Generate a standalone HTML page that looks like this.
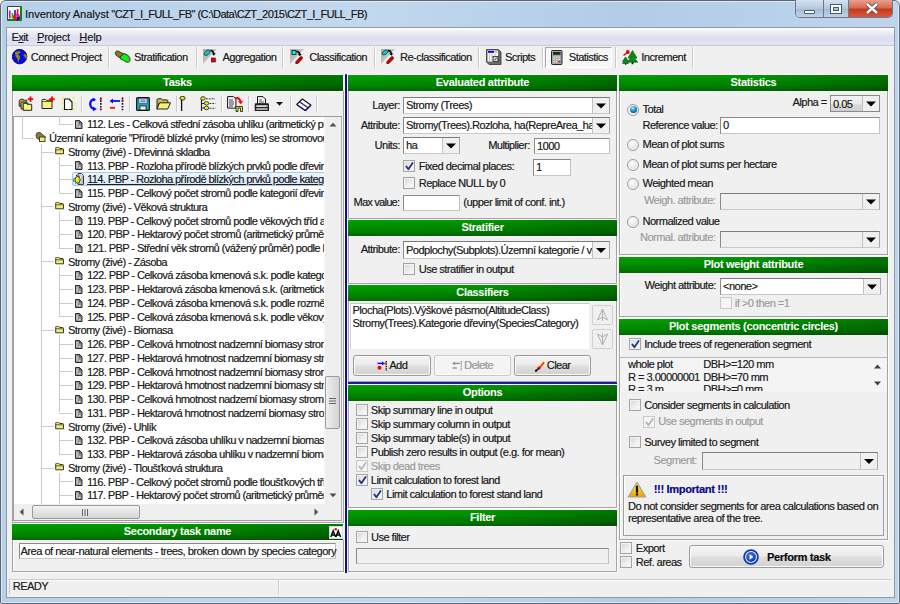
<!DOCTYPE html><html><head><meta charset="utf-8"><style>
html,body{margin:0;padding:0;width:900px;height:604px;overflow:hidden;background:#f0f0f0}
body{position:relative;font-family:"Liberation Sans",sans-serif}
.a{position:absolute}
.t{position:absolute;font-size:11px;line-height:13px;letter-spacing:-0.5px;white-space:nowrap;color:#1e1e1e;text-shadow:0.3px 0 0 rgba(30,30,30,0.5)}
.b{font-weight:bold;letter-spacing:-0.3px}
.g{color:#9d9d9d;text-shadow:0.3px 0 0 rgba(157,157,157,0.5)}
.hdr{position:absolute;background:linear-gradient(90deg,rgba(0,0,0,0) 0,rgba(0,0,0,0.06) 50%,rgba(0,0,0,0.26) 100%),linear-gradient(#00a200,#008c00 50%,#007800 85%,#006800);color:#fff;font-size:11px;font-weight:bold;letter-spacing:-0.3px;text-align:center;box-shadow:0 -1px 0 #fff,0 1px 0 #fff}
.cb{position:absolute;width:10.4px;height:10.4px;border:1px solid #a4a4a4;background:linear-gradient(135deg,#d6d6d6,#f0f0f0 60%,#fafafa);box-shadow:inset 0 0 0 1px #f2f2f2}
.rd{position:absolute;width:10px;height:10px;border:1px solid #9c9c9c;border-radius:50%;background:radial-gradient(circle at 40% 35%,#fdfdfd 0,#e8e8e8 55%,#cdcdcd 100%);box-shadow:inset 0 0 0 1px #f6f6f6;box-sizing:content-box}
.cmb{position:absolute;box-sizing:border-box;border:1px solid #7a7a7a;border-right-color:#a8a8a8;border-bottom-color:#c8c8c8;border-left-color:#8a8a8a}
.cbtn{position:absolute;right:0;top:0;bottom:0;background:#f0f0f0;border-left:1px solid #c0c0c0}
.tb{position:absolute;box-sizing:border-box;border:1px solid #8a8a8a;border-right-color:#c0c0c0;border-bottom-color:#c8c8c8}
.btn{position:absolute;box-sizing:border-box;border:1px solid #9a9a9a;border-radius:3px;background:linear-gradient(#f4f4f4 0,#ececec 45%,#dedede 55%,#d2d2d2 100%);box-shadow:inset 0 0 0 1px #fbfbfb}
.sep{position:absolute;width:1px;background:#c8c8c8;box-shadow:1px 0 0 #fff}
</style></head><body>

<div class="a" style="left:0px;top:0px;width:900px;height:604px;background:linear-gradient(90deg,#b6d0ea,#c2d8ee 40%,#b2cce8 70%,#bed5ec);border:1px solid #5e6670;box-shadow:inset 1px 1px 0 #dce9f6,inset -1px -1px 0 #dce9f6;box-sizing:border-box;border-radius:6px 6px 2px 2px"></div>
<div class="a" style="left:6px;top:27px;width:889px;height:571px;background:#f0f0f0;border:1px solid #8e9aaa;box-sizing:border-box"></div>
<svg class="a" style="left:7px;top:6px" width="15" height="15" viewBox="0 0 15 15">
<rect x="0" y="0" width="15" height="15" fill="#0a8a0a"/>
<rect x="0" y="0" width="13" height="13" fill="#fff"/>
<path d="M0.5 13V0.5H13" stroke="#404040" stroke-width="1" fill="none"/>
<rect x="2" y="4.5" width="1.6" height="8" fill="#e000e0"/><rect x="4.6" y="7" width="1.6" height="5.5" fill="#00d000"/><rect x="7.2" y="4" width="1.6" height="5" fill="#1010e0"/><rect x="9.8" y="3" width="1.6" height="6" fill="#f01010"/>
<path d="M9.5 11 L9.5 7.5 A3.5 3.5 0 0 1 13 11z" fill="#e010e0"/><path d="M9.5 11 L13 11 A3.5 3.5 0 0 1 9.5 14.5z" fill="#0a0aa0"/><path d="M9.5 11 L9.5 14.5 A3.5 3.5 0 0 1 6 11 A3.5 3.5 0 0 1 9.5 7.5z" fill="#f01010"/>
</svg>
<div class="t" style="left:25px;top:7.9px;font-size:11px;letter-spacing:0px;color:#1b1b1b">Inventory Analyst<span style="letter-spacing:-0.53px"> "CZT_I_FULL_FB" (C:\Data\CZT_2015\CZT_I_FULL_FB)</span></div>
<div class="a" style="left:795px;top:0;width:98px;height:18px;border:1px solid #6a7890;border-top:none;border-radius:0 0 5px 5px;overflow:hidden;box-sizing:border-box;display:flex">
<div style="width:27px;height:100%;background:linear-gradient(#d5e2f0,#b3c8de 50%,#a3b9d2 51%,#c0d3e8);border-right:1px solid #6a7890;position:relative"><div style="position:absolute;left:7.5px;top:10px;width:9px;height:2px;background:#fff;border:1px solid #4a5870;border-radius:1px"></div></div>
<div style="width:24px;height:100%;background:linear-gradient(#d5e2f0,#b3c8de 50%,#a3b9d2 51%,#c0d3e8);border-right:1px solid #6a7890;position:relative"><div style="position:absolute;left:7px;top:5px;width:6px;height:4px;border:2px solid #fff;outline:1px solid #4a5870;box-shadow:inset 0 0 0 1px #4a5870"></div></div>
<div style="flex:1;height:100%;background:linear-gradient(#e8a090,#d86a50 45%,#c7381c 55%,#d85a3c);position:relative"><svg width="46" height="18" style="position:absolute;left:0;top:0"><path d="M18 4 L28 13 M28 4 L18 13" stroke="#454545" stroke-width="4"/><path d="M18 4 L28 13 M28 4 L18 13" stroke="#fff" stroke-width="2.4"/></svg></div>
</div>
<div class="a" style="left:7px;top:28px;width:887px;height:17px;background:linear-gradient(#ffffff,#f2f3f9 15%,#e2e5f1 45%,#dcdfef 60%,#e2e4f3)"></div>
<div class="a" style="left:7px;top:45px;width:887px;height:1px;background:#c9cad6"></div>
<div class="t " style="left:11.5px;top:30.7px;"><span>E<u>x</u>it</span></div>
<div class="t " style="left:37px;top:30.7px;letter-spacing:-0.2px"><u>P</u>roject</div>
<div class="t " style="left:79.3px;top:30.7px;letter-spacing:-0.1px"><u>H</u>elp</div>
<div class="sep" style="left:108px;top:47px;height:21px"></div>
<div class="sep" style="left:196px;top:47px;height:21px"></div>
<div class="sep" style="left:282px;top:47px;height:21px"></div>
<div class="sep" style="left:374px;top:47px;height:21px"></div>
<div class="sep" style="left:478px;top:47px;height:21px"></div>
<div class="sep" style="left:542px;top:47px;height:21px"></div>
<div class="sep" style="left:615px;top:47px;height:21px"></div>
<div class="sep" style="left:692px;top:47px;height:21px"></div>
<div class="a" style="left:545px;top:47px;width:67px;height:21px;border:1px solid #a8a8a8;border-right-color:#fff;border-bottom-color:#fff;background:#f7f7f7;box-sizing:border-box"></div>
<div class="t " style="left:30.7px;top:51.2px;">Connect Project</div>
<div class="t " style="left:134px;top:51.2px;">Stratification</div>
<div class="t " style="left:222.5px;top:51.2px;">Aggregation</div>
<div class="t " style="left:309.2px;top:51.2px;">Classification</div>
<div class="t " style="left:400px;top:51.2px;">Re-classification</div>
<div class="t " style="left:505px;top:51.2px;">Scripts</div>
<div class="t " style="left:568.8px;top:51.2px;">Statistics</div>
<div class="t " style="left:641.3px;top:51.2px;">Increment</div>
<svg class="a" style="left:11.8px;top:49px" width="16" height="16"><circle cx="7.6" cy="7.6" r="7.3" fill="#0a0ae6" stroke="#00006a" stroke-width="0.8"/><path d="M3 3.2 q2 -1.5 5.5 -0.8 l-0.5 1.8 q-1.5 0.3 -2 1.5 q1.5 0.5 2.2 2.2 q0 2 -1.2 3.2 l-0.6 2.4 q-1 -2 -1.2 -4 q-1.3 -1.5 -2 -3.5z" fill="#8a8a10"/><path d="M12.5 5 q1.5 0.2 2.4 1.6 q0.2 2.4 -0.8 3.6 q-1.2 -1.2 -1.6 -2.6 q-0.8 -0.6 -1.4 -1.2z" fill="#8a8a10"/></svg>
<svg class="a" style="left:114px;top:50px" width="17" height="14"><path d="M1.5 2 q1 -1.5 3 -0.8 l6 3.3 l-2.5 4 l-3.5 -1.5 l-2.5 -2 q-1 -1.5 -0.5 -3z" fill="#8a7a10" stroke="#222" stroke-width="0.9"/><path d="M6 7 l4 -3.5 l3.5 1.5 l2.2 2.5 l0.3 3 l-1.5 1.8 l-3 -0.5 l-2.5 -1.8 l-2.5 -1z" fill="#10f010" stroke="#222" stroke-width="0.9"/></svg>
<svg class="a" style="left:203px;top:49px" width="15" height="15"><defs><linearGradient id="tg" x1="0" y1="0" x2="1" y2="1"><stop offset="0" stop-color="#a8a8a8"/><stop offset="1" stop-color="#e0e0e0"/></linearGradient></defs><path d="M0 0 h14 l-14 15z" fill="url(#tg)"/><path d="M1 5.5 q0 -2 2.5 -4 q2.5 -1.5 3.5 0.5 q0.5 1.5 -2 3.8 q-2.5 1.5 -4 -0.3z" fill="#10c8c0" stroke="#0a3a3a" stroke-width="0.8"/><path d="M7.5 1.5 q3 0 3.3 3.5" stroke="#000" stroke-width="1.6" fill="none"/><path d="M8.8 4.5 l2 2.2 l2 -2.2z" fill="#000"/><rect x="8.3" y="9" width="4" height="4" fill="#f00000" stroke="#400" stroke-width="0.6"/></svg>
<svg class="a" style="left:290px;top:49px" width="15" height="15"><path d="M0 0 h14 l-14 15z" fill="url(#tg)"/><rect x="2" y="1.5" width="4" height="4" fill="#10f0f0" stroke="#0a3030" stroke-width="0.9"/><path d="M6.5 2.5 q3 0 3.3 3" stroke="#000" stroke-width="1.6" fill="none"/><path d="M7.8 5 l2 2.2 l2 -2.2z" fill="#000"/><path d="M6 12.5 l4 -4.5 q1.5 -1 2.3 0 q0.7 1 -0.3 2.3 l-4 4.2 q-1.5 0.8 -2.2 0 q-0.6 -0.8 0.2 -2z" fill="#d00000" stroke="#400" stroke-width="0.6"/></svg>
<svg class="a" style="left:381px;top:49px" width="15" height="15"><path d="M0 0 h14 l-14 15z" fill="url(#tg)"/><path d="M1 5 q0 -2 2.5 -3.5 q2.5 -1.2 3.3 0.5 q0.4 1.5 -2 3.3 q-2.5 1.3 -3.8 -0.3z" fill="#10c8c0" stroke="#0a3a3a" stroke-width="0.8"/><path d="M7 1.5 q3 0 3.3 3.5" stroke="#000" stroke-width="1.6" fill="none"/><path d="M8.3 4.5 l2 2.2 l2 -2.2z" fill="#000"/><path d="M6 12.5 l4 -4.5 q1.5 -1 2.3 0 q0.7 1 -0.3 2.3 l-4 4.2 q-1.5 0.8 -2.2 0 q-0.6 -0.8 0.2 -2z" fill="#d00000" stroke="#400" stroke-width="0.6"/></svg>
<svg class="a" style="left:486px;top:49px" width="16" height="16"><path d="M0.5 0.5h12l2.5 2.5v12.5h-12l-2.5-2.5z" fill="#6a6a6a" stroke="#333" stroke-width="0.8"/><rect x="1.5" y="1.5" width="10.5" height="11" fill="#fafafa"/><rect x="2" y="2" width="6" height="1.8" fill="#0000f0"/><rect x="8.5" y="2" width="2.5" height="1.8" fill="#f0a0a0"/><path d="M3.5 4.5v7.5M6 4.5v7.5M9 4.5v3" stroke="#c8c8c8" stroke-width="1.2"/><rect x="7" y="7.5" width="5" height="5" fill="#d8d8d8" stroke="#222" stroke-width="0.8"/><path d="M8 11.5l3-3" stroke="#222" stroke-width="0.9"/></svg>
<svg class="a" style="left:551px;top:50px" width="12" height="15"><rect x="0.5" y="0.5" width="10.5" height="14" rx="1" fill="#a4a4a4" stroke="#111" stroke-width="0.9"/><rect x="2" y="2" width="7.5" height="2.8" fill="#0a3a1a"/><path d="M2.3 6.5h1.6v1.2h-1.6zM4.9 6.5h1.6v1.2h-1.6zM7.5 6.5h1.6v1.2h-1.6zM2.3 8.8h1.6v1.2h-1.6zM4.9 8.8h1.6v1.2h-1.6zM7.5 8.8h1.6v1.2h-1.6zM2.3 11.1h1.6v1.2h-1.6zM4.9 11.1h1.6v1.2h-1.6z" fill="#e8e8e8"/><rect x="7.2" y="11.1" width="2.3" height="1.3" fill="#f01010"/></svg>
<svg class="a" style="left:622px;top:50px" width="16" height="15"><path d="M10.5 0.5 l-4.5 7.5 h2.5 l-3.2 4.2 h10.4 l-3.2 -4.2 h2.5z" fill="#0a8a10" stroke="#062" stroke-width="0.7"/><rect x="9.6" y="12.2" width="1.8" height="2" fill="#111"/><path d="M3.5 7 l-3 4.5 h1.5 l-1.5 2 h6 l-1.5 -2 h1.5z" fill="#0a8a10" stroke="#062" stroke-width="0.7"/><rect x="3" y="13.3" width="1.2" height="1.5" fill="#111"/><path d="M1.5 5.5 l3.5 -3" stroke="#e00" stroke-width="1.4"/><circle cx="5.8" cy="2" r="1.9" fill="#f00010"/></svg>
<div class="hdr" style="left:12px;top:75px;width:331px;height:15.5px;line-height:15.5px">Tasks</div>
<div class="a" style="left:12px;top:91px;width:332px;height:432px;border:1px solid #a4a4a4;border-top:none;box-shadow:inset 1px 0 0 #fff, 1px 1px 0 #fff;box-sizing:border-box"></div>
<svg class="a" style="left:18px;top:96px" width="17" height="16"><path d="M1.2 5.5q0-2 2-2.3h2l1 1h2.5v6h-7.5z" fill="#a8a040" stroke="#222" stroke-width=".9"/><path d="M3 7.5q0-1.5 1.5-1.5h2l1 1h2.5v6h-7z" fill="#c8c058" stroke="#222" stroke-width=".9"/><path d="M5.2 7.3h3l1 1h4.5v6h-8.5z" fill="#f8f480" stroke="#222" stroke-width="1"/><path d="M12.5 0.5v5.4M9.8 3.2h5.4" stroke="#f00" stroke-width="1.8"/></svg>
<svg class="a" style="left:41px;top:96px" width="15" height="14"><path d="M1 4.3q0-1 1-1h2.5l1 1h4.5q1 0 1 1v7.2h-10z" fill="#f8f480" stroke="#222" stroke-width="1"/><path d="M1.2 5.5h9.5" stroke="#222" stroke-width=".7"/><path d="M11 0.5v5.4M8.3 3.2h5.4" stroke="#f00" stroke-width="1.8"/></svg>
<svg class="a" style="left:61px;top:96px" width="15" height="15"><path d="M3.5 3h4.5l3 3v7.5h-7.5z" fill="#fff" stroke="#111" stroke-width="1.1" stroke-linejoin="round"/><path d="M1 1.5l2 2M13.5 1l-2 2.2M1 13.5l2-1.5M14 14l-2-1.5M0.5 7.5h2M12.5 8h2M7.5 14.5v-1" stroke="#f0f020" stroke-width="1.2"/></svg>
<div class="sep" style="left:81px;top:96px;height:16px"></div>
<svg class="a" style="left:88px;top:97px" width="15" height="15"><path d="M6.5 2.2 A4.3 4.8 0 1 0 6.5 11.8" stroke="#0a10f0" stroke-width="2.3" fill="none"/><path d="M4.8 1.2l3.6 1.6l-3.2 1.8z" fill="#0a10f0"/><path d="M5 9.8l4 2.2l-4 2.3z" fill="#0a10f0"/><path d="M12.8 0.5v13" stroke="#111" stroke-width="1.6" stroke-dasharray="1.6 1.2"/><circle cx="12.8" cy="2.5" r="1" fill="#f00"/><circle cx="12.8" cy="12.3" r="1" fill="#f00"/></svg>
<svg class="a" style="left:109px;top:97px" width="15" height="15"><path d="M2.5 4h8.5" stroke="#0a10f0" stroke-width="1.8"/><path d="M0.5 4l3.5-2.6v5.2z" fill="#0a10f0"/><path d="M1 10.8h5" stroke="#f01010" stroke-width="1.8"/><path d="M13.5 0.5v13" stroke="#111" stroke-width="1.6" stroke-dasharray="1.6 1.2"/><circle cx="13.5" cy="3" r="1" fill="#f00"/></svg>
<div class="sep" style="left:129px;top:96px;height:16px"></div>
<svg class="a" style="left:136px;top:97px" width="14" height="14"><path d="M0.6 1.6q0-1 1-1h10.8q1 0 1 1v10.8q0 1-1 1h-10.8q-1 0-1-1z" fill="#18a8b0" stroke="#111" stroke-width="1.1"/><rect x="3" y="1.3" width="8" height="5.2" fill="#e8ecf8" stroke="#223" stroke-width=".5"/><path d="M4.5 3h5M4.5 4.8h5" stroke="#4050c0" stroke-width=".9"/><rect x="4" y="9" width="6" height="4" fill="#f0f0f0" stroke="#111" stroke-width=".7"/></svg>
<svg class="a" style="left:156px;top:98px" width="15" height="12"><path d="M1 2q0-1.3 1.3-1.3h3l1 1.2h4.5q1 0 1 1v2.5h-9l-1.8 5.8z" fill="#c8c040" stroke="#222" stroke-width="1"/><path d="M1 11l2.5-6.2h11l-2.8 6.2z" fill="#f8f070" stroke="#222" stroke-width="1" stroke-linejoin="round"/></svg>
<div class="sep" style="left:176px;top:96px;height:16px"></div>
<svg class="a" style="left:179px;top:96px" width="8" height="16"><ellipse cx="3.5" cy="2.2" rx="2.6" ry="1.9" fill="#e8e020" stroke="#222" stroke-width=".9"/><path d="M2.6 3.8v11.2" stroke="#111" stroke-width="1.3"/></svg>
<svg class="a" style="left:200px;top:96px" width="16" height="16"><path d="M1.5 2.5v12.5M1.5 7.5h3M1.5 12h3" stroke="#222" stroke-width="1.2"/><ellipse cx="3" cy="2.4" rx="2.3" ry="1.8" fill="#e8e020" stroke="#222" stroke-width=".8"/><ellipse cx="6.5" cy="7.3" rx="2.3" ry="1.8" fill="#e8e020" stroke="#222" stroke-width=".8"/><ellipse cx="6.5" cy="12" rx="2.3" ry="1.8" fill="#e8e020" stroke="#222" stroke-width=".8"/><path d="M6 2.8h9M9.5 7.5h6M9.5 12.3h6" stroke="#333" stroke-width="1" stroke-dasharray="1.8 1"/></svg>
<div class="sep" style="left:221px;top:96px;height:16px"></div>
<svg class="a" style="left:227px;top:96px" width="17" height="16"><path d="M0.6 0.6h5.8l2.5 2.5v9h-8.3z" fill="#f4f4f4" stroke="#111" stroke-width="1"/><path d="M2 4h4M2 6h5M2 8h5M2 10h4" stroke="#333" stroke-width=".9"/><path d="M8 2.5q4.5-1.5 5.5 3" stroke="#f00" stroke-width="2" fill="none"/><path d="M11 5.2l2.8 3l2.5-3.2z" fill="#f00"/><path d="M9 10.5h6.5v5h-2v-3.5h-2.5v3.5h-2z" fill="#f0f030" stroke="#111" stroke-width=".8"/></svg>
<div class="sep" style="left:248px;top:96px;height:16px"></div>
<svg class="a" style="left:254px;top:96px" width="16" height="16"><path d="M3.5 0.6h5.5l2.5 2.5v5h-8z" fill="#f4f4f4" stroke="#111" stroke-width="1"/><path d="M5 4h3M5 6h5" stroke="#333" stroke-width=".8"/><path d="M0.7 8.3q0-1 1-1h12.3q1 0 1 1v6.7h-14.3z" fill="#222"/><rect x="2.3" y="9.3" width="11.3" height="1.6" fill="#f0f0f0"/><rect x="2.3" y="12.3" width="11.3" height="1.4" fill="#e0e0e0"/><rect x="12.3" y="9.3" width="1.3" height="1.6" fill="#f06060"/></svg>
<svg class="a" style="left:276px;top:102px" width="8" height="5"><path d="M0 0h7l-3.5 3.8z" fill="#111"/></svg>
<div class="sep" style="left:290px;top:96px;height:16px"></div>
<svg class="a" style="left:296px;top:98px" width="16" height="13"><path d="M0.8 6.5l5.5-5.5l8.5 6l-5.5 5.5z" fill="#fafafa" stroke="#111" stroke-width="1.1" stroke-linejoin="round"/><path d="M3.5 4l8.5 6M1 7l8.5 6l5.5-5.5" stroke="#1010c0" stroke-width="1" fill="none"/><path d="M3.8 3.6l8.3 5.9" stroke="#333" stroke-width=".9"/></svg>
<div class="sep" style="left:316px;top:96px;height:16px"></div>
<div class="a" style="left:13px;top:115.8px;width:329px;height:405.2px;background:#fff;border:1px solid #a0a0a0;border-right-color:#b0b0b0;border-top-color:#9a9a9a;box-sizing:border-box"></div>
<div class="a" style="left:14px;top:116px;width:310px;height:388px;overflow:hidden">
<div class="a" style="left:8px;top:0.0px;width:1px;height:21.7px;background:#cbcbcb"></div>
<div class="a" style="left:8px;top:21.7px;width:12px;height:1px;background:#cbcbcb"></div>
<div class="a" style="left:27px;top:27.7px;width:1px;height:361.3px;background:#cbcbcb"></div>
<div class="a" style="left:27px;top:35.5px;width:13px;height:1px;background:#cbcbcb"></div>
<div class="a" style="left:27px;top:90.4px;width:13px;height:1px;background:#cbcbcb"></div>
<div class="a" style="left:27px;top:145.4px;width:13px;height:1px;background:#cbcbcb"></div>
<div class="a" style="left:27px;top:214.1px;width:13px;height:1px;background:#cbcbcb"></div>
<div class="a" style="left:27px;top:310.3px;width:13px;height:1px;background:#cbcbcb"></div>
<div class="a" style="left:27px;top:351.5px;width:13px;height:1px;background:#cbcbcb"></div>
<div class="a" style="left:45px;top:0.0px;width:1px;height:8.0px;background:#cbcbcb"></div>
<div class="a" style="left:45px;top:8.0px;width:14px;height:1px;background:#cbcbcb"></div>
<div class="a" style="left:45px;top:40.5px;width:1px;height:36.2px;background:#cbcbcb"></div>
<div class="a" style="left:45px;top:49.2px;width:14px;height:1px;background:#cbcbcb"></div>
<div class="a" style="left:45px;top:63.0px;width:14px;height:1px;background:#cbcbcb"></div>
<div class="a" style="left:45px;top:76.7px;width:14px;height:1px;background:#cbcbcb"></div>
<div class="a" style="left:45px;top:95.4px;width:1px;height:36.2px;background:#cbcbcb"></div>
<div class="a" style="left:45px;top:104.2px;width:14px;height:1px;background:#cbcbcb"></div>
<div class="a" style="left:45px;top:117.9px;width:14px;height:1px;background:#cbcbcb"></div>
<div class="a" style="left:45px;top:131.7px;width:14px;height:1px;background:#cbcbcb"></div>
<div class="a" style="left:45px;top:150.4px;width:1px;height:50.0px;background:#cbcbcb"></div>
<div class="a" style="left:45px;top:159.1px;width:14px;height:1px;background:#cbcbcb"></div>
<div class="a" style="left:45px;top:172.9px;width:14px;height:1px;background:#cbcbcb"></div>
<div class="a" style="left:45px;top:186.6px;width:14px;height:1px;background:#cbcbcb"></div>
<div class="a" style="left:45px;top:200.4px;width:14px;height:1px;background:#cbcbcb"></div>
<div class="a" style="left:45px;top:219.1px;width:1px;height:77.4px;background:#cbcbcb"></div>
<div class="a" style="left:45px;top:227.8px;width:14px;height:1px;background:#cbcbcb"></div>
<div class="a" style="left:45px;top:241.6px;width:14px;height:1px;background:#cbcbcb"></div>
<div class="a" style="left:45px;top:255.3px;width:14px;height:1px;background:#cbcbcb"></div>
<div class="a" style="left:45px;top:269.1px;width:14px;height:1px;background:#cbcbcb"></div>
<div class="a" style="left:45px;top:282.8px;width:14px;height:1px;background:#cbcbcb"></div>
<div class="a" style="left:45px;top:296.5px;width:14px;height:1px;background:#cbcbcb"></div>
<div class="a" style="left:45px;top:315.3px;width:1px;height:22.5px;background:#cbcbcb"></div>
<div class="a" style="left:45px;top:324.0px;width:14px;height:1px;background:#cbcbcb"></div>
<div class="a" style="left:45px;top:337.8px;width:14px;height:1px;background:#cbcbcb"></div>
<div class="a" style="left:45px;top:356.5px;width:1px;height:32.5px;background:#cbcbcb"></div>
<div class="a" style="left:45px;top:365.2px;width:14px;height:1px;background:#cbcbcb"></div>
<div class="a" style="left:45px;top:379.0px;width:14px;height:1px;background:#cbcbcb"></div>
<svg class="a" style="left:61px;top:4.1px" width="8" height="9"><path d="M0.5 0.5h4l2.5 2.5v5.5h-6.5z" fill="#969696" stroke="#2a2a2a"/><path d="M4.5 0.5v2.5h2.5" fill="none" stroke="#3a3a3a" stroke-width=".8"/><path d="M2 2v5" stroke="#e8e8e8" stroke-width=".9"/><circle cx="4.8" cy="6.8" r=".7" fill="#fff"/></svg>
<div class="t" style="left:73px;top:2.3px;letter-spacing:-0.56px">112. Les - Celková střední zásoba uhlíku (aritmetický průměr)</div>
<svg class="a" style="left:21px;top:15.9px" width="11" height="10"><path d="M1 3.5q0-3 3-3q2 0 3.5 2l3 2.5l-3 3.5l-5.5-2z" fill="#8a8430" stroke="#333" stroke-width=".9"/><rect x="4.5" y="5" width="5.5" height="4.5" fill="#f4f070" stroke="#333" stroke-width=".9"/></svg>
<div class="t" style="left:35px;top:16.0px;letter-spacing:-0.56px">Územní kategorie "Přírodě blízké prvky (mimo les) se stromovou vegetací"</div>
<svg class="a" style="left:41px;top:31.3px" width="9" height="8"><path d="M0.7 1.2q0-1 1-1h2l1 1.3h2.8q1 0 1 1v4.3h-7.8z" fill="#f0ea78" stroke="#3a3a20" stroke-width="1"/><path d="M1 2.8h7" stroke="#3a3a20" stroke-width=".8"/></svg>
<div class="t" style="left:54px;top:29.8px;letter-spacing:-0.56px">Stromy (živé) - Dřevinná skladba</div>
<svg class="a" style="left:61px;top:45.3px" width="8" height="9"><path d="M0.5 0.5h4l2.5 2.5v5.5h-6.5z" fill="#969696" stroke="#2a2a2a"/><path d="M4.5 0.5v2.5h2.5" fill="none" stroke="#3a3a3a" stroke-width=".8"/><path d="M2 2v5" stroke="#e8e8e8" stroke-width=".9"/><circle cx="4.8" cy="6.8" r=".7" fill="#fff"/></svg>
<div class="t" style="left:73px;top:43.5px;letter-spacing:-0.56px">113. PBP - Rozloha přírodě blízkých prvků podle dřevin</div>
<div class="a" style="left:58px;top:56.1px;width:260px;height:13.8px;background:linear-gradient(#edf4fc,#dae8f8);border:1px solid #a8c8ec;box-sizing:border-box;border-radius:2px"></div>
<svg class="a" style="left:59px;top:57.0px" width="11" height="12"><path d="M5 0.6h3.5l2 2v8.8h-5.5z" fill="#e8e8e8" stroke="#333" stroke-width="1"/><path d="M9 3v7" stroke="#999" stroke-width="1"/><path d="M3 2l1.5 1.5M7 2.5l-1.5 1.5M1.5 6h1.5M7.5 7l-1.5 0M2.5 10.5l1.5-1.5M7 10.5l-1.5-1.5" stroke="#222" stroke-width="1"/><ellipse cx="4.5" cy="6.8" rx="2.6" ry="3.3" fill="#f0e020" stroke="#222" stroke-width=".8"/><rect x="0" y="5.5" width="1.6" height="3.5" fill="#18b0b0"/></svg>
<div class="t" style="left:73px;top:57.3px;text-decoration:underline;letter-spacing:-0.56px">114. PBP - Rozloha přírodě blízkých prvků podle kategorie</div>
<svg class="a" style="left:61px;top:72.8px" width="8" height="9"><path d="M0.5 0.5h4l2.5 2.5v5.5h-6.5z" fill="#969696" stroke="#2a2a2a"/><path d="M4.5 0.5v2.5h2.5" fill="none" stroke="#3a3a3a" stroke-width=".8"/><path d="M2 2v5" stroke="#e8e8e8" stroke-width=".9"/><circle cx="4.8" cy="6.8" r=".7" fill="#fff"/></svg>
<div class="t" style="left:73px;top:71.0px;letter-spacing:-0.56px">115. PBP - Celkový počet stromů podle kategorií dřevin</div>
<svg class="a" style="left:41px;top:86.2px" width="9" height="8"><path d="M0.7 1.2q0-1 1-1h2l1 1.3h2.8q1 0 1 1v4.3h-7.8z" fill="#f0ea78" stroke="#3a3a20" stroke-width="1"/><path d="M1 2.8h7" stroke="#3a3a20" stroke-width=".8"/></svg>
<div class="t" style="left:54px;top:84.7px;letter-spacing:-0.56px">Stromy (živé) - Věková struktura</div>
<svg class="a" style="left:61px;top:100.3px" width="8" height="9"><path d="M0.5 0.5h4l2.5 2.5v5.5h-6.5z" fill="#969696" stroke="#2a2a2a"/><path d="M4.5 0.5v2.5h2.5" fill="none" stroke="#3a3a3a" stroke-width=".8"/><path d="M2 2v5" stroke="#e8e8e8" stroke-width=".9"/><circle cx="4.8" cy="6.8" r=".7" fill="#fff"/></svg>
<div class="t" style="left:73px;top:98.5px;letter-spacing:-0.56px">119. PBP - Celkový počet stromů podle věkových tříd a</div>
<svg class="a" style="left:61px;top:114.0px" width="8" height="9"><path d="M0.5 0.5h4l2.5 2.5v5.5h-6.5z" fill="#969696" stroke="#2a2a2a"/><path d="M4.5 0.5v2.5h2.5" fill="none" stroke="#3a3a3a" stroke-width=".8"/><path d="M2 2v5" stroke="#e8e8e8" stroke-width=".9"/><circle cx="4.8" cy="6.8" r=".7" fill="#fff"/></svg>
<div class="t" style="left:73px;top:112.2px;letter-spacing:-0.56px">120. PBP - Hektarový počet stromů (aritmetický průměr)</div>
<svg class="a" style="left:61px;top:127.8px" width="8" height="9"><path d="M0.5 0.5h4l2.5 2.5v5.5h-6.5z" fill="#969696" stroke="#2a2a2a"/><path d="M4.5 0.5v2.5h2.5" fill="none" stroke="#3a3a3a" stroke-width=".8"/><path d="M2 2v5" stroke="#e8e8e8" stroke-width=".9"/><circle cx="4.8" cy="6.8" r=".7" fill="#fff"/></svg>
<div class="t" style="left:73px;top:126.0px;letter-spacing:-0.56px">121. PBP - Střední věk stromů (vážený průměr) podle kategorie</div>
<svg class="a" style="left:41px;top:141.2px" width="9" height="8"><path d="M0.7 1.2q0-1 1-1h2l1 1.3h2.8q1 0 1 1v4.3h-7.8z" fill="#f0ea78" stroke="#3a3a20" stroke-width="1"/><path d="M1 2.8h7" stroke="#3a3a20" stroke-width=".8"/></svg>
<div class="t" style="left:54px;top:139.7px;letter-spacing:-0.56px">Stromy (živé) - Zásoba</div>
<svg class="a" style="left:61px;top:155.2px" width="8" height="9"><path d="M0.5 0.5h4l2.5 2.5v5.5h-6.5z" fill="#969696" stroke="#2a2a2a"/><path d="M4.5 0.5v2.5h2.5" fill="none" stroke="#3a3a3a" stroke-width=".8"/><path d="M2 2v5" stroke="#e8e8e8" stroke-width=".9"/><circle cx="4.8" cy="6.8" r=".7" fill="#fff"/></svg>
<div class="t" style="left:73px;top:153.4px;letter-spacing:-0.56px">122. PBP - Celková zásoba kmenová s.k. podle kategorie</div>
<svg class="a" style="left:61px;top:169.0px" width="8" height="9"><path d="M0.5 0.5h4l2.5 2.5v5.5h-6.5z" fill="#969696" stroke="#2a2a2a"/><path d="M4.5 0.5v2.5h2.5" fill="none" stroke="#3a3a3a" stroke-width=".8"/><path d="M2 2v5" stroke="#e8e8e8" stroke-width=".9"/><circle cx="4.8" cy="6.8" r=".7" fill="#fff"/></svg>
<div class="t" style="left:73px;top:167.2px;letter-spacing:-0.56px">123. PBP - Hektarová zásoba kmenová s.k. (aritmetický</div>
<svg class="a" style="left:61px;top:182.7px" width="8" height="9"><path d="M0.5 0.5h4l2.5 2.5v5.5h-6.5z" fill="#969696" stroke="#2a2a2a"/><path d="M4.5 0.5v2.5h2.5" fill="none" stroke="#3a3a3a" stroke-width=".8"/><path d="M2 2v5" stroke="#e8e8e8" stroke-width=".9"/><circle cx="4.8" cy="6.8" r=".7" fill="#fff"/></svg>
<div class="t" style="left:73px;top:180.9px;letter-spacing:-0.56px">124. PBP - Celková zásoba kmenová s.k. podle rozměrů</div>
<svg class="a" style="left:61px;top:196.5px" width="8" height="9"><path d="M0.5 0.5h4l2.5 2.5v5.5h-6.5z" fill="#969696" stroke="#2a2a2a"/><path d="M4.5 0.5v2.5h2.5" fill="none" stroke="#3a3a3a" stroke-width=".8"/><path d="M2 2v5" stroke="#e8e8e8" stroke-width=".9"/><circle cx="4.8" cy="6.8" r=".7" fill="#fff"/></svg>
<div class="t" style="left:73px;top:194.7px;letter-spacing:-0.56px">125. PBP - Celková zásoba kmenová s.k. podle věkových</div>
<svg class="a" style="left:41px;top:209.9px" width="9" height="8"><path d="M0.7 1.2q0-1 1-1h2l1 1.3h2.8q1 0 1 1v4.3h-7.8z" fill="#f0ea78" stroke="#3a3a20" stroke-width="1"/><path d="M1 2.8h7" stroke="#3a3a20" stroke-width=".8"/></svg>
<div class="t" style="left:54px;top:208.4px;letter-spacing:-0.56px">Stromy (živé) - Biomasa</div>
<svg class="a" style="left:61px;top:223.9px" width="8" height="9"><path d="M0.5 0.5h4l2.5 2.5v5.5h-6.5z" fill="#969696" stroke="#2a2a2a"/><path d="M4.5 0.5v2.5h2.5" fill="none" stroke="#3a3a3a" stroke-width=".8"/><path d="M2 2v5" stroke="#e8e8e8" stroke-width=".9"/><circle cx="4.8" cy="6.8" r=".7" fill="#fff"/></svg>
<div class="t" style="left:73px;top:222.1px;letter-spacing:-0.56px">126. PBP - Celková hmotnost nadzemní biomasy stromů</div>
<svg class="a" style="left:61px;top:237.7px" width="8" height="9"><path d="M0.5 0.5h4l2.5 2.5v5.5h-6.5z" fill="#969696" stroke="#2a2a2a"/><path d="M4.5 0.5v2.5h2.5" fill="none" stroke="#3a3a3a" stroke-width=".8"/><path d="M2 2v5" stroke="#e8e8e8" stroke-width=".9"/><circle cx="4.8" cy="6.8" r=".7" fill="#fff"/></svg>
<div class="t" style="left:73px;top:235.9px;letter-spacing:-0.56px">127. PBP - Hektarová hmotnost nadzemní biomasy stromů</div>
<svg class="a" style="left:61px;top:251.4px" width="8" height="9"><path d="M0.5 0.5h4l2.5 2.5v5.5h-6.5z" fill="#969696" stroke="#2a2a2a"/><path d="M4.5 0.5v2.5h2.5" fill="none" stroke="#3a3a3a" stroke-width=".8"/><path d="M2 2v5" stroke="#e8e8e8" stroke-width=".9"/><circle cx="4.8" cy="6.8" r=".7" fill="#fff"/></svg>
<div class="t" style="left:73px;top:249.6px;letter-spacing:-0.56px">128. PBP - Celková hmotnost nadzemní biomasy stromů</div>
<svg class="a" style="left:61px;top:265.2px" width="8" height="9"><path d="M0.5 0.5h4l2.5 2.5v5.5h-6.5z" fill="#969696" stroke="#2a2a2a"/><path d="M4.5 0.5v2.5h2.5" fill="none" stroke="#3a3a3a" stroke-width=".8"/><path d="M2 2v5" stroke="#e8e8e8" stroke-width=".9"/><circle cx="4.8" cy="6.8" r=".7" fill="#fff"/></svg>
<div class="t" style="left:73px;top:263.4px;letter-spacing:-0.56px">129. PBP - Hektarová hmotnost nadzemní biomasy stromů</div>
<svg class="a" style="left:61px;top:278.9px" width="8" height="9"><path d="M0.5 0.5h4l2.5 2.5v5.5h-6.5z" fill="#969696" stroke="#2a2a2a"/><path d="M4.5 0.5v2.5h2.5" fill="none" stroke="#3a3a3a" stroke-width=".8"/><path d="M2 2v5" stroke="#e8e8e8" stroke-width=".9"/><circle cx="4.8" cy="6.8" r=".7" fill="#fff"/></svg>
<div class="t" style="left:73px;top:277.1px;letter-spacing:-0.56px">130. PBP - Celková hmotnost nadzemí biomasy stromů</div>
<svg class="a" style="left:61px;top:292.6px" width="8" height="9"><path d="M0.5 0.5h4l2.5 2.5v5.5h-6.5z" fill="#969696" stroke="#2a2a2a"/><path d="M4.5 0.5v2.5h2.5" fill="none" stroke="#3a3a3a" stroke-width=".8"/><path d="M2 2v5" stroke="#e8e8e8" stroke-width=".9"/><circle cx="4.8" cy="6.8" r=".7" fill="#fff"/></svg>
<div class="t" style="left:73px;top:290.8px;letter-spacing:-0.56px">131. PBP - Hektarová hmotnost nadzemí biomasy stromů</div>
<svg class="a" style="left:41px;top:306.1px" width="9" height="8"><path d="M0.7 1.2q0-1 1-1h2l1 1.3h2.8q1 0 1 1v4.3h-7.8z" fill="#f0ea78" stroke="#3a3a20" stroke-width="1"/><path d="M1 2.8h7" stroke="#3a3a20" stroke-width=".8"/></svg>
<div class="t" style="left:54px;top:304.6px;letter-spacing:-0.56px">Stromy (živé) - Uhlík</div>
<svg class="a" style="left:61px;top:320.1px" width="8" height="9"><path d="M0.5 0.5h4l2.5 2.5v5.5h-6.5z" fill="#969696" stroke="#2a2a2a"/><path d="M4.5 0.5v2.5h2.5" fill="none" stroke="#3a3a3a" stroke-width=".8"/><path d="M2 2v5" stroke="#e8e8e8" stroke-width=".9"/><circle cx="4.8" cy="6.8" r=".7" fill="#fff"/></svg>
<div class="t" style="left:73px;top:318.3px;letter-spacing:-0.56px">132. PBP - Celková zásoba uhlíku v nadzemní biomase</div>
<svg class="a" style="left:61px;top:333.9px" width="8" height="9"><path d="M0.5 0.5h4l2.5 2.5v5.5h-6.5z" fill="#969696" stroke="#2a2a2a"/><path d="M4.5 0.5v2.5h2.5" fill="none" stroke="#3a3a3a" stroke-width=".8"/><path d="M2 2v5" stroke="#e8e8e8" stroke-width=".9"/><circle cx="4.8" cy="6.8" r=".7" fill="#fff"/></svg>
<div class="t" style="left:73px;top:332.1px;letter-spacing:-0.56px">133. PBP - Hektarová zásoba uhlíku v nadzemní biomase</div>
<svg class="a" style="left:41px;top:347.3px" width="9" height="8"><path d="M0.7 1.2q0-1 1-1h2l1 1.3h2.8q1 0 1 1v4.3h-7.8z" fill="#f0ea78" stroke="#3a3a20" stroke-width="1"/><path d="M1 2.8h7" stroke="#3a3a20" stroke-width=".8"/></svg>
<div class="t" style="left:54px;top:345.8px;letter-spacing:-0.56px">Stromy (živé) - Tloušťková struktura</div>
<svg class="a" style="left:61px;top:361.3px" width="8" height="9"><path d="M0.5 0.5h4l2.5 2.5v5.5h-6.5z" fill="#969696" stroke="#2a2a2a"/><path d="M4.5 0.5v2.5h2.5" fill="none" stroke="#3a3a3a" stroke-width=".8"/><path d="M2 2v5" stroke="#e8e8e8" stroke-width=".9"/><circle cx="4.8" cy="6.8" r=".7" fill="#fff"/></svg>
<div class="t" style="left:73px;top:359.5px;letter-spacing:-0.56px">116. PBP - Celkový počet stromů podle tloušťkových tříd</div>
<svg class="a" style="left:61px;top:375.1px" width="8" height="9"><path d="M0.5 0.5h4l2.5 2.5v5.5h-6.5z" fill="#969696" stroke="#2a2a2a"/><path d="M4.5 0.5v2.5h2.5" fill="none" stroke="#3a3a3a" stroke-width=".8"/><path d="M2 2v5" stroke="#e8e8e8" stroke-width=".9"/><circle cx="4.8" cy="6.8" r=".7" fill="#fff"/></svg>
<div class="t" style="left:73px;top:373.3px;letter-spacing:-0.56px">117. PBP - Hektarový počet stromů (aritmetický průměr)</div>
</div>
<div class="a" style="left:324px;top:116.8px;width:17px;height:387.2px;background:#efefef;border-left:1px solid #f6f6f6;box-sizing:border-box"></div>
<svg class="a" style="left:329px;top:122px" width="8" height="5"><path d="M0.5 4.5l3.5-3.8l3.5 3.8z" fill="#505050"/></svg>
<svg class="a" style="left:329px;top:493px" width="8" height="5"><path d="M0.5 0.5l3.5 3.8l3.5-3.8z" fill="#505050"/></svg>
<div class="a" style="left:325px;top:376px;width:15px;height:53px;background:linear-gradient(90deg,#f0f0f0,#e0e0e0 50%,#d4d4d4);border:1px solid #9a9a9a;border-radius:2px;box-sizing:border-box"></div>
<svg class="a" style="left:329px;top:398px" width="8" height="7"><path d="M0 0.5h7M0 3h7M0 5.5h7" stroke="#666"/></svg>
<div class="a" style="left:14px;top:504px;width:310px;height:16px;background:#efefef;box-sizing:border-box"></div>
<div class="a" style="left:324px;top:504px;width:17px;height:16px;background:#f0f0f0"></div>
<svg class="a" style="left:19px;top:508px" width="5" height="8"><path d="M4.5 0.5l-3.8 3.5l3.8 3.5z" fill="#505050"/></svg>
<svg class="a" style="left:314px;top:508px" width="5" height="8"><path d="M0.5 0.5l3.8 3.5l-3.8 3.5z" fill="#505050"/></svg>
<div class="a" style="left:32px;top:505px;width:108px;height:14px;background:linear-gradient(#f2f2f2,#e4e4e4 50%,#d6d6d6);border:1px solid #9a9a9a;border-radius:2px;box-sizing:border-box"></div>
<svg class="a" style="left:82px;top:509px" width="7" height="7"><path d="M0.5 0v7M3 0v7M5.5 0v7" stroke="#666"/></svg>
<div class="hdr" style="left:12px;top:524px;width:331px;height:15.5px;line-height:15.5px">Secondary task name</div>
<div class="a" style="left:329px;top:526px;width:13.5px;height:12.5px;background:#fff;border:1px solid #d8d8d8;box-sizing:border-box"><svg width="12" height="11" style="position:absolute;left:0;top:0"><path d="M0.8 10l2.4-6.2l2.4 6.2M1.7 8h3M5.8 10l2.4-6.2l2.4 6.2M6.7 8h3" stroke="#000" stroke-width="1.5" fill="none"/><circle cx="5.7" cy="2.3" r="1.3" fill="#e01010"/></svg></div>
<div class="a" style="left:12px;top:540px;width:332px;height:32px;border:1px solid #a4a4a4;border-top:none;box-shadow:inset 1px 0 0 #fff, 1px 1px 0 #fff;box-sizing:border-box"></div>
<div class="tb" style="left:19px;top:543px;width:317px;height:16px;background:#fff"><div class="t" style="left:0.5px;top:1.3px;letter-spacing:-0.48px">Area of near-natural elements - trees, broken down by species category</div></div>
<div class="a" style="left:344.6px;top:73.6px;width:2.1999999999999886px;height:499.4px;background:#10108e;border-radius:1px 1px 0 0"></div>
<div class="hdr" style="left:348px;top:75px;width:269px;height:15.5px;line-height:15.5px">Evaluated attribute</div>
<div class="a" style="left:348px;top:91px;width:269px;height:128px;border:1px solid #a4a4a4;border-top:none;box-shadow:inset 1px 0 0 #fff, 1px 1px 0 #fff;box-sizing:border-box"></div>
<div class="t " style="right:500.3px;top:98.9px;">Layer:</div>
<div class="cmb" style="left:403px;top:97px;width:207px;height:17px;background:#fff">
<div class="t" style="left:2px;top:1.0px;width:186px;overflow:hidden">Stromy (Trees)</div>
<div class="cbtn" style="width:16px"><svg width="16" height="15" style="position:absolute;left:0;top:0"><path d="M3.0 5.5 h10 l-5 5 z" fill="#000"/></svg></div>
</div>
<div class="t " style="right:500.3px;top:118.9px;">Attribute:</div>
<div class="cmb" style="left:403px;top:117px;width:207px;height:17px;background:#fff">
<div class="t" style="left:2px;top:1.0px;width:186px;overflow:hidden">Stromy(Trees).Rozloha, ha(RepreArea_ha)</div>
<div class="cbtn" style="width:16px"><svg width="16" height="15" style="position:absolute;left:0;top:0"><path d="M3.0 5.5 h10 l-5 5 z" fill="#000"/></svg></div>
</div>
<div class="t " style="right:500.3px;top:139.2px;">Units:</div>
<div class="cmb" style="left:403px;top:137px;width:57px;height:17px;background:#fff">
<div class="t" style="left:2px;top:1.0px;width:36px;overflow:hidden">ha</div>
<div class="cbtn" style="width:16px"><svg width="16" height="15" style="position:absolute;left:0;top:0"><path d="M3.0 5.5 h10 l-5 5 z" fill="#000"/></svg></div>
</div>
<div class="t " style="right:370.29999999999995px;top:139.2px;">Multiplier:</div>
<div class="tb" style="left:534px;top:138px;width:76px;height:16px;background:#fff">
<div class="t" style="left:2px;top:0.5px">1000</div>
</div>
<div class="cb" style="left:403px;top:159.7px;border-color:#a4a4a4">
<svg width="11" height="11" style="position:absolute;left:0;top:0"><path d="M2.4 5.6 L4.4 8.2 L8.6 2" stroke="#2a3a88" stroke-width="1.9" fill="none" stroke-linecap="round" stroke-linejoin="round"/></svg>
</div>
<div class="t " style="left:418.7px;top:159.7px;">Fixed decimal places:</div>
<div class="tb" style="left:533px;top:159px;width:38px;height:17px;background:#fff">
<div class="t" style="left:2px;top:1.0px">1</div>
</div>
<div class="cb" style="left:403px;top:176.7px;border-color:#a4a4a4">
</div>
<div class="t " style="left:418.7px;top:177.2px;">Replace NULL by 0</div>
<div class="t " style="right:500.8px;top:196.2px;letter-spacing:-0.75px">Max value:</div>
<div class="tb" style="left:403px;top:195px;width:57px;height:16px;background:#fff">
</div>
<div class="t " style="left:463.3px;top:196.2px;">(upper limit of conf. int.)</div>
<div class="hdr" style="left:348px;top:220px;width:269px;height:15.5px;line-height:15.5px">Stratifier</div>
<div class="a" style="left:348px;top:236px;width:269px;height:48px;border:1px solid #a4a4a4;border-top:none;box-shadow:inset 1px 0 0 #fff, 1px 1px 0 #fff;box-sizing:border-box"></div>
<div class="t " style="right:500.3px;top:243.2px;">Attribute:</div>
<div class="cmb" style="left:403px;top:241px;width:207px;height:18px;background:#fff">
<div class="t" style="left:2px;top:1.5px;width:186px;overflow:hidden">Podplochy(Subplots).Územní kategorie / vymezení</div>
<div class="cbtn" style="width:16px"><svg width="16" height="16" style="position:absolute;left:0;top:0"><path d="M3.0 6.0 h10 l-5 5 z" fill="#000"/></svg></div>
</div>
<div class="cb" style="left:403px;top:262.7px;border-color:#a4a4a4">
</div>
<div class="t " style="left:418.7px;top:263.2px;">Use stratifier in output</div>
<div class="hdr" style="left:348px;top:285px;width:269px;height:15.5px;line-height:15.5px">Classifiers</div>
<div class="a" style="left:348px;top:301px;width:269px;height:81px;border:1px solid #a4a4a4;border-top:none;box-shadow:inset 1px 0 0 #fff, 1px 1px 0 #fff;box-sizing:border-box"></div>
<div class="a" style="left:350px;top:302.5px;width:239px;height:46.5px;background:#fff;border-top:1px solid #c8c8c8;border-left:1px solid #d0d0d0;box-sizing:border-box"></div>
<div class="t " style="left:352.5px;top:303.7px;">Plocha(Plots).Výškové pásmo(AltitudeClass)</div>
<div class="t " style="left:352.5px;top:316.7px;">Stromy(Trees).Kategorie dřeviny(SpeciesCategory)</div>
<div class="a" style="left:592px;top:305px;width:21px;height:20px;border:1px solid #d0d0d0;border-radius:2px;background:#f0f0f0;box-sizing:border-box"></div>
<svg class="a" style="left:596px;top:308px" width="13" height="14"><path d="M6.5 1v12M6.5 1l-5 11l5-3l5 3z" stroke="#b0b0b0" fill="none"/></svg>
<div class="a" style="left:592px;top:329px;width:21px;height:20px;border:1px solid #d0d0d0;border-radius:2px;background:#f0f0f0;box-sizing:border-box"></div>
<svg class="a" style="left:596px;top:332px" width="13" height="14"><path d="M6.5 13v-12M6.5 13l-5-11l5 3l5-3z" stroke="#b0b0b0" fill="none"/></svg>
<div class="btn" style="left:353px;top:355px;width:78px;height:21px;"><svg style="position:absolute;left:23px;top:5px" width="11" height="10"><path d="M0.5 2.4h5" stroke="#0a10f0" stroke-width="1.5"/><path d="M5 0.3l2.8 2.1l-2.8 2.1z" fill="#0a10f0"/><circle cx="2.5" cy="6.8" r="2" fill="#f00"/><path d="M9.3 0v10" stroke="#111" stroke-width="1.4" stroke-dasharray="1.4 1"/><circle cx="8.3" cy="2.4" r="1" fill="#f00"/></svg><div class="t" style="left:35.2px;top:2.6px">Add</div></div>
<div class="btn" style="left:434px;top:355px;width:77px;height:21px;border-color:#c9c9c9;background:linear-gradient(#f4f4f4,#f4f4f4)"><svg style="position:absolute;left:16.5px;top:5px" width="11" height="10"><path d="M2.5 2.4h5.5" stroke="#8a8a8a" stroke-width="1.3"/><path d="M0.3 2.4l2.5-1.8v3.6z" fill="#8a8a8a"/><path d="M0.5 7h4.5" stroke="#8a8a8a" stroke-width="1.3"/><path d="M9.3 0v10" stroke="#8a8a8a" stroke-width="1.3" stroke-dasharray="1.4 1"/></svg><div class="t" style="left:29px;top:2.6px;color:#a8a8a8">Delete</div></div>
<div class="btn" style="left:514px;top:355px;width:77px;height:21px;"><svg style="position:absolute;left:19px;top:4px" width="12" height="12"><path d="M4.5 8.5l6-7" stroke="#e8e020" stroke-width="2.6"/><path d="M5 8.5l5-6" stroke="#e02020" stroke-width="1.2"/><circle cx="5" cy="8" r="1.6" fill="#e00"/><path d="M1.5 10.5q1.5-3 3.5-2.5q0 2.5-3.5 3.5" fill="#222"/><circle cx="2" cy="10.8" r="1.2" fill="#222"/></svg><div class="t" style="left:31.7px;top:2.6px">Clear</div></div>
<div class="a" style="left:348px;top:382px;width:269px;height:3px;background:#1c1c9c"></div>
<div class="hdr" style="left:348px;top:385px;width:269px;height:15.5px;line-height:15.5px">Options</div>
<div class="a" style="left:348px;top:401px;width:269px;height:107px;border:1px solid #a4a4a4;border-top:none;box-shadow:inset 1px 0 0 #fff, 1px 1px 0 #fff;box-sizing:border-box"></div>
<div class="cb" style="left:356px;top:403.7px;border-color:#a4a4a4">
</div>
<div class="t " style="left:370.8px;top:403.5px;">Skip summary line in output</div>
<div class="cb" style="left:356px;top:417.7px;border-color:#a4a4a4">
</div>
<div class="t " style="left:370.8px;top:417.5px;">Skip summary column in output</div>
<div class="cb" style="left:356px;top:431.7px;border-color:#a4a4a4">
</div>
<div class="t " style="left:370.8px;top:431.5px;">Skip summary table(s) in output</div>
<div class="cb" style="left:356px;top:445.7px;border-color:#a4a4a4">
</div>
<div class="t " style="left:370.8px;top:445.5px;">Publish zero results in output (e.g. for mean)</div>
<div class="cb" style="left:356px;top:459.7px;border-color:#cacaca;background:#f6f6f6">
<svg width="11" height="11" style="position:absolute;left:0;top:0"><path d="M2.4 5.6 L4.4 8.2 L8.6 2" stroke="#b8b8b8" stroke-width="1.9" fill="none" stroke-linecap="round" stroke-linejoin="round"/></svg>
</div>
<div class="t g" style="left:370.8px;top:459.5px;">Skip dead trees</div>
<div class="cb" style="left:356px;top:473.7px;border-color:#a4a4a4">
<svg width="11" height="11" style="position:absolute;left:0;top:0"><path d="M2.4 5.6 L4.4 8.2 L8.6 2" stroke="#2a3a88" stroke-width="1.9" fill="none" stroke-linecap="round" stroke-linejoin="round"/></svg>
</div>
<div class="t " style="left:370.8px;top:473.5px;">Limit calculation to forest land</div>
<div class="cb" style="left:371px;top:487.7px;border-color:#a4a4a4">
<svg width="11" height="11" style="position:absolute;left:0;top:0"><path d="M2.4 5.6 L4.4 8.2 L8.6 2" stroke="#2a3a88" stroke-width="1.9" fill="none" stroke-linecap="round" stroke-linejoin="round"/></svg>
</div>
<div class="t " style="left:386.3px;top:487.5px;">Limit calculation to forest stand land</div>
<div class="hdr" style="left:348px;top:510px;width:269px;height:15.5px;line-height:15.5px">Filter</div>
<div class="a" style="left:348px;top:526px;width:269px;height:46px;border:1px solid #a4a4a4;border-top:none;box-shadow:inset 1px 0 0 #fff, 1px 1px 0 #fff;box-sizing:border-box"></div>
<div class="cb" style="left:356px;top:530.7px;border-color:#a4a4a4">
</div>
<div class="t " style="left:371px;top:530.7px;">Use filter</div>
<div class="tb" style="left:356px;top:548px;width:253px;height:16px;background:#f0f0f0">
</div>
<div class="hdr" style="left:619px;top:75px;width:269px;height:15.5px;line-height:15.5px">Statistics</div>
<div class="a" style="left:619px;top:91px;width:269px;height:164px;border:1px solid #a4a4a4;border-top:none;box-shadow:inset 1px 0 0 #fff, 1px 1px 0 #fff;box-sizing:border-box"></div>
<div class="rd" style="left:627.3px;top:103.8px">
<div style="position:absolute;left:1.5px;top:1.5px;width:7px;height:7px;border-radius:50%;background:radial-gradient(circle at 40% 30%,#b8f0ff 0,#3aa0d8 35%,#0c5a90 75%,#083a66 100%)"></div>
</div>
<div class="t " style="left:642.5px;top:103.0px;">Total</div>
<div class="t " style="left:792.5px;top:96.4px;">Alpha =</div>
<div class="cmb" style="left:830px;top:95px;width:50px;height:17px;background:linear-gradient(#f2f2f2,#ebebeb 50%,#dddddd 51%,#cfcfcf);border:1px solid #8a8a8a"><div class="t" style="left:2px;top:1.5px">0.05</div><div class="cbtn" style="width:16px;background:#f0f0f0"><svg width="16" height="15" style="position:absolute;left:0;top:0"><path d="M3 5.5h10l-5 5z" fill="#000"/></svg></div></div>
<div class="t " style="left:642.5px;top:118.9px;">Reference value:</div>
<div class="tb" style="left:720px;top:117px;width:160px;height:17px;background:#fff">
<div class="t" style="left:2px;top:1.0px">0</div>
</div>
<div class="rd" style="left:627.3px;top:139.2px">
</div>
<div class="t " style="left:642.5px;top:138.4px;">Mean of plot sums</div>
<div class="rd" style="left:627.3px;top:158.8px">
</div>
<div class="t " style="left:642.5px;top:158.0px;">Mean of plot sums per hectare</div>
<div class="rd" style="left:627.3px;top:178.1px">
</div>
<div class="t " style="left:642.5px;top:177.2px;">Weighted mean</div>
<div class="t g" style="right:184.70000000000005px;top:194.4px;">Weigh. attribute:</div>
<div class="cmb" style="left:720px;top:193px;width:160px;height:17px;background:#f0f0f0">
<div class="cbtn" style="width:16px"><svg width="16" height="15" style="position:absolute;left:0;top:0"><path d="M3.0 5.5 h10 l-5 5 z" fill="#000"/></svg></div>
</div>
<div class="rd" style="left:627.3px;top:215.7px">
</div>
<div class="t " style="left:642.5px;top:214.7px;">Normalized value</div>
<div class="t g" style="right:184.70000000000005px;top:231.4px;">Normal. attribute:</div>
<div class="cmb" style="left:720px;top:231px;width:160px;height:17px;background:#f0f0f0">
<div class="cbtn" style="width:16px"><svg width="16" height="15" style="position:absolute;left:0;top:0"><path d="M3.0 5.5 h10 l-5 5 z" fill="#000"/></svg></div>
</div>
<div class="hdr" style="left:619px;top:257px;width:269px;height:15.5px;line-height:15.5px">Plot weight attribute</div>
<div class="a" style="left:619px;top:273px;width:269px;height:44px;border:1px solid #a4a4a4;border-top:none;box-shadow:inset 1px 0 0 #fff, 1px 1px 0 #fff;box-sizing:border-box"></div>
<div class="t " style="right:184.20000000000005px;top:279.4px;">Weight attribute:</div>
<div class="cmb" style="left:720px;top:278px;width:161px;height:17px;background:#fff">
<div class="t" style="left:2px;top:1.0px;width:140px;overflow:hidden">&lt;none&gt;</div>
<div class="cbtn" style="width:16px"><svg width="16" height="15" style="position:absolute;left:0;top:0"><path d="M3.0 5.5 h10 l-5 5 z" fill="#000"/></svg></div>
</div>
<div class="cb" style="left:720px;top:296.7px;border-color:#cacaca;background:#f6f6f6">
</div>
<div class="t g" style="left:734.7px;top:296.9px;">if &gt;0 then =1</div>
<div class="hdr" style="left:619px;top:319px;width:269px;height:15.5px;line-height:15.5px">Plot segments (concentric circles)</div>
<div class="a" style="left:619px;top:335px;width:269px;height:205px;border:1px solid #a4a4a4;border-top:none;box-shadow:inset 1px 0 0 #fff, 1px 1px 0 #fff;box-sizing:border-box"></div>
<div class="cb" style="left:629px;top:337.7px;border-color:#a4a4a4">
<svg width="11" height="11" style="position:absolute;left:0;top:0"><path d="M2.4 5.6 L4.4 8.2 L8.6 2" stroke="#2a3a88" stroke-width="1.9" fill="none" stroke-linecap="round" stroke-linejoin="round"/></svg>
</div>
<div class="t " style="left:644.2px;top:338.0px;">Include trees of regeneration segment</div>
<div class="a" style="left:620px;top:357px;width:267px;height:35px;background:#f4f4f4;border-top:1px solid #b8b8b8;box-sizing:border-box;overflow:hidden"></div>
<div class="a" style="left:620px;top:358px;width:249px;height:33px;overflow:hidden">
<div class="t" style="left:8px;top:0.0px">whole plot</div><div class="t" style="left:83.3px;top:0.0px">DBH&gt;=120 mm</div>
<div class="t" style="left:8px;top:12.6px">R = 3.00000001</div><div class="t" style="left:83.3px;top:12.6px">DBH&gt;=70 mm</div>
<div class="t" style="left:8px;top:25.2px">R = 3 m</div><div class="t" style="left:83.3px;top:25.2px">DBH&gt;=0 mm</div>
</div>
<svg class="a" style="left:874px;top:364px" width="8" height="5"><path d="M0 4.5l3.5-4l3.5 4z" fill="#404040"/></svg>
<svg class="a" style="left:874px;top:381px" width="8" height="5"><path d="M0 0.5l3.5 4l3.5-4z" fill="#404040"/></svg>
<div class="cb" style="left:629px;top:398.7px;border-color:#a4a4a4">
</div>
<div class="t " style="left:644.2px;top:398.5px;">Consider segments in calculation</div>
<div class="cb" style="left:643px;top:415.7px;border-color:#cacaca;background:#f6f6f6">
<svg width="11" height="11" style="position:absolute;left:0;top:0"><path d="M2.4 5.6 L4.4 8.2 L8.6 2" stroke="#b8b8b8" stroke-width="1.9" fill="none" stroke-linecap="round" stroke-linejoin="round"/></svg>
</div>
<div class="t g" style="left:658.3px;top:415.2px;">Use segments in output</div>
<div class="cb" style="left:629px;top:435.7px;border-color:#a4a4a4">
</div>
<div class="t " style="left:644.2px;top:435.5px;">Survey limited to segment</div>
<div class="t g" style="right:203.29999999999995px;top:453.9px;">Segment:</div>
<div class="cmb" style="left:702px;top:452px;width:176px;height:18px;background:#f0f0f0">
<div class="cbtn" style="width:16px"><svg width="16" height="16" style="position:absolute;left:0;top:0"><path d="M3.0 6.0 h10 l-5 5 z" fill="#000"/></svg></div>
</div>
<div class="a" style="left:623px;top:475px;width:261px;height:61px;border:1px solid #a0a0a0;box-shadow:inset 1px 1px 0 #fff;box-sizing:border-box"></div>
<svg class="a" style="left:627px;top:481px" width="20" height="17"><defs><linearGradient id="wg" x1="0" y1="0" x2="0" y2="1"><stop offset="0" stop-color="#fff040"/><stop offset="1" stop-color="#f0a000"/></linearGradient></defs><path d="M10 1.2l8.8 14.8h-17.6z" fill="url(#wg)" stroke="#a0a0a0" stroke-width="1.1" stroke-linejoin="round"/><path d="M10 5.5v5.5" stroke="#111" stroke-width="2.2" stroke-linecap="round"/><circle cx="10" cy="13.4" r="1.2" fill="#111"/></svg>
<div class="t b" style="left:653.7px;top:483.0px;color:#0c0c98">!!! Important !!!</div>
<div class="t " style="left:628px;top:499.7px;">Do not consider segments for area calculations based on</div>
<div class="t " style="left:628px;top:512.2px;">representative area of the tree.</div>
<div class="cb" style="left:620px;top:541.7px;border-color:#a4a4a4">
</div>
<div class="t " style="left:635.8px;top:541.7px;">Export</div>
<div class="cb" style="left:620px;top:555.7px;border-color:#a4a4a4">
</div>
<div class="t " style="left:635.8px;top:556.0px;">Ref. areas</div>
<div class="btn" style="left:689px;top:545px;width:195px;height:23px;"><svg style="position:absolute;left:53.3px;top:3px" width="16" height="16"><defs><radialGradient id="pg" cx="0.4" cy="0.35" r="0.7"><stop offset="0" stop-color="#3a80e8"/><stop offset="1" stop-color="#0a3aa8"/></radialGradient></defs><circle cx="8" cy="8" r="6.9" fill="#e8f2ff" stroke="#1438a8" stroke-width="1.8"/><circle cx="8" cy="8" r="4.9" fill="url(#pg)"/><path d="M6.6 5.2l3.8 2.8l-3.8 2.8z" fill="#fff"/></svg><div class="t b" style="left:77px;top:5px;color:#111">Perform task</div></div>
<div class="a" style="left:8px;top:579px;width:883px;height:1px;background:#cdcdcd;box-shadow:0 1px 0 #fafafa"></div>
<div class="a" style="left:9px;top:580px;width:269px;height:14px;border-left:1px solid #c8c8c8;box-sizing:border-box"></div>
<div class="a" style="left:278px;top:580px;width:1px;height:14px;background:#cdcdcd;box-shadow:1px 0 0 #fafafa"></div>
<div class="t " style="left:12.7px;top:579.7px;">READY</div>
</body></html>
